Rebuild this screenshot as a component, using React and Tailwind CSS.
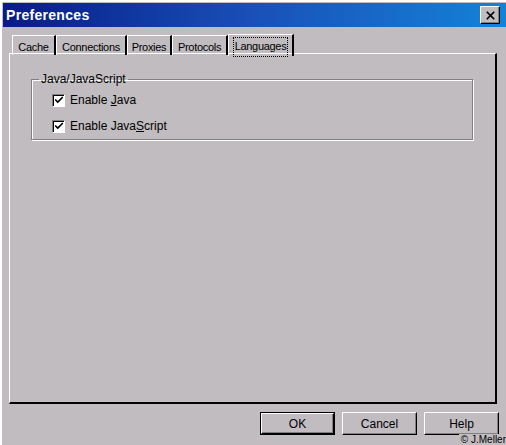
import { Check, X } from 'lucide-react';

const tabs = [
  { label: 'Cache', w: 'w-[44px]' },
  { label: 'Connections', w: 'w-[71px]' },
  { label: 'Proxies', w: 'w-[45px]' },
  { label: 'Protocols', w: 'w-[56px]' },
  { label: 'Languages', w: 'w-[66px]', active: true },
];

export default function App() {
  return (
    <div
      className="relative h-[445px] w-[506px] overflow-hidden bg-[#c0bcc0] text-[11px] text-black"
      style={{ fontFamily: '"Liberation Sans", Arial, sans-serif' }}
    >
      {/* window frame */}
      <div className="flex h-full flex-col border-l-2 border-t-2 border-white pl-[1px] pt-[1px]">
        <div className="flex h-[24px] items-center justify-between bg-gradient-to-r from-[#0a1a86] via-[#1a50b8] to-[#1482d8] pl-[3px] pr-[6px]">
          <span className="text-[14px] font-bold tracking-[0.3px] text-white">Preferences</span>
          <div className="flex h-[18px] w-[20px] items-center justify-center border border-b-black border-l-white border-r-black border-t-white bg-[#c0bcc0] shadow-[inset_-1px_-1px_0_#808080]">
            <X size={13} strokeWidth={3.2} />
          </div>
        </div>

        <div className="flex flex-1 flex-col px-[6px] pt-[7px]">
          <div className="flex items-end pl-[3px]">
            {tabs.map((t) => (
              <Tab key={t.label} {...t} />
            ))}
          </div>
          <div className="-mt-[2px] h-[351px] w-[488px] border-l border-t border-b-2 border-r-2 border-l-white border-t-white border-b-[#000] border-r-[#000] px-[21px] pt-[16px]">
            <fieldset className="h-[70px] w-[442px] border border-[#808080] shadow-[1px_1px_0_#fff,inset_1px_1px_0_#fff] pl-[20px] pr-2">
              <legend className="ml-[-13px] px-[2px] text-[12px]">Java/JavaScript</legend>
              <div className="flex flex-col gap-[8px] pt-[3px] text-[12px]">
                <CheckRow label="Enable " u="J" rest="ava" />
                <CheckRow label="Enable Java" u="S" rest="cript" />
              </div>
            </fieldset>
          </div>

          <div className="mt-[8px] flex justify-end gap-[7px] pr-[1px] text-[12px]">
            <Button label="OK" def />
            <Button label="Cancel" />
            <Button label="Help" />
          </div>
        </div>
      </div>
      <div className="absolute bottom-0 right-0 bg-[#c0bcc0] pl-[2px] text-[10px] leading-[11px]">© J.Meller</div>
    </div>
  );
}

function Tab({ label, w, active }) {
  return (
    <div
      className={`relative flex justify-center whitespace-nowrap border-l border-t border-r-2 border-l-white border-t-white border-r-black tracking-[-0.3px] ${w} ${
        active ? 'z-10 -mb-[1px] h-[22px] pt-[3px]' : 'h-[20px] pt-[3px]'
      }`}
    >
      <span className={active ? 'outline outline-1 outline-dotted outline-black px-[1px]' : ''}>{label}</span>
    </div>
  );
}

function CheckRow({ label, u, rest }) {
  return (
    <div className="flex items-center gap-[5px]">
      <div className="flex h-[13px] w-[13px] items-center justify-center border border-b-white border-l-[#808080] border-r-white border-t-[#808080] bg-white shadow-[inset_1px_1px_0_#000]">
        <Check size={10} strokeWidth={4} />
      </div>
      <span>
        {label}
        <span className="underline">{u}</span>
        {rest}
      </span>
    </div>
  );
}

function Button({ label, def }) {
  return (
    <div
      className={`flex h-[23px] w-[75px] items-center justify-center bg-[#c0bcc0] ${
        def ? 'border border-black' : ''
      }`}
    >
      <div className="flex h-full w-full items-center justify-center border border-b-black border-l-white border-r-black border-t-white shadow-[inset_-1px_-1px_0_#808080]">
        {label}
      </div>
    </div>
  );
}
